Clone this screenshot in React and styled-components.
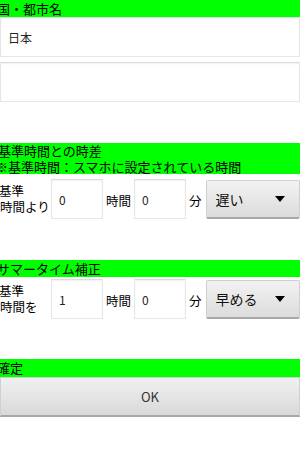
import React from 'react'
import styled, { createGlobalStyle } from 'styled-components'

const GlobalStyle = createGlobalStyle`
  html, body {
    margin: 0;
    padding: 0;
    background: #ffffff;
    font-family: "Noto Sans CJK JP", "Noto Sans", sans-serif;
  }
`

const Page = styled.div`
  width: 300px;
  height: 450px;
  overflow: hidden;
  display: flex;
  flex-direction: column;
  background: #fff;
`

const Band = styled.div`
  background: #00ff00;
  color: #000;
  font-size: 13px;
  line-height: ${(p) => p.$lh || '17px'};
  padding-bottom: ${(p) => p.$pb || '0px'};
  text-indent: ${(p) => p.$indent || '-3px'};
  white-space: nowrap;
  overflow: hidden;
  margin-bottom: ${(p) => p.$after || '0px'};
`

const Line = styled.div`
  text-indent: ${(p) => p.$indent || '-3px'};
`

const Field = styled.div`
  box-sizing: border-box;
  height: 40px;
  width: ${(p) => p.$w || '100%'};
  flex: none;
  background: #fff;
  border: 1px solid #e6e6e6;
  border-top-color: #dcdcdc;
  box-shadow: inset 0 1px 2px rgba(0, 0, 0, 0.06);
  display: flex;
  align-items: center;
  padding-left: ${(p) => p.$pad || '7px'};
  font-size: 12px;
  color: #222;
  margin-bottom: ${(p) => p.$after || '0px'};
`

const Spacer = styled.div`
  height: ${(p) => p.$h}px;
  flex: none;
`

const Row = styled.div`
  display: flex;
  align-items: center;
  height: 40px;
  gap: 3px;
`

const Label = styled.div`
  width: 48px;
  font-size: 12.5px;
  line-height: 16px;
  color: #000;
  white-space: nowrap;
  text-indent: -1px;
`

const Unit = styled.div`
  font-size: 12.5px;
  color: #000;
  white-space: nowrap;
  padding-top: 2px;
`

const Spinner = styled.div`
  box-sizing: border-box;
  margin-left: 1px;
  flex: 1;
  height: 39px;
  background: linear-gradient(#f2f2f2, #dcdcdc);
  border: 1px solid #cfcfcf;
  border-bottom: 2px solid #a8a8a8;
  border-radius: 2px;
  display: flex;
  align-items: center;
  justify-content: space-between;
  padding: 0 14px 0 9px;
  font-size: 14px;
  color: #111;
`

const Arrow = styled.span`
  width: 0;
  height: 0;
  border-left: 5px solid transparent;
  border-right: 5px solid transparent;
  border-top: 6px solid #000;
`

const OkButton = styled.div`
  box-sizing: border-box;
  height: 40px;
  background: linear-gradient(#f0f0f0, #d9d9d9);
  border: 1px solid #d0d0d0;
  border-bottom: 2px solid #a8a8a8;
  display: flex;
  align-items: center;
  justify-content: center;
  font-size: 13px;
  color: #333;
`

function TimeRow({ label, hours, minutes, direction }) {
  return (
    <Row>
      <Label>{label[0]}<br />{label[1]}</Label>
      <Field $w="52px">{hours}</Field>
      <Unit>時間</Unit>
      <Field $w="52px">{minutes}</Field>
      <Unit>分</Unit>
      <Spinner>
        <span>{direction}</span>
        <Arrow />
      </Spinner>
    </Row>
  )
}

export default function App() {
  return (
    <Page>
      <GlobalStyle />
      <Band>国・都市名</Band>
      <Field $after="5px">日本</Field>
      <Field />
      <Spacer $h={41} />
      <Band $lh="15.5px" $indent="0px" $after="5px">
        <Line $indent="-2px">基準時間との時差</Line>
        <Line $indent="-5px">※基準時間：スマホに設定されている時間</Line>
      </Band>
      <TimeRow label={['基準', '時間より']} hours="0" minutes="0" direction="遅い" />
      <Spacer $h={41} />
      <Band $after="2px">サマータイム補正</Band>
      <TimeRow label={['基準', '時間を']} hours="1" minutes="0" direction="早める" />
      <Spacer $h={40} />
      <Band $lh="18px">確定</Band>
      <OkButton>OK</OkButton>
    </Page>
  )
}
